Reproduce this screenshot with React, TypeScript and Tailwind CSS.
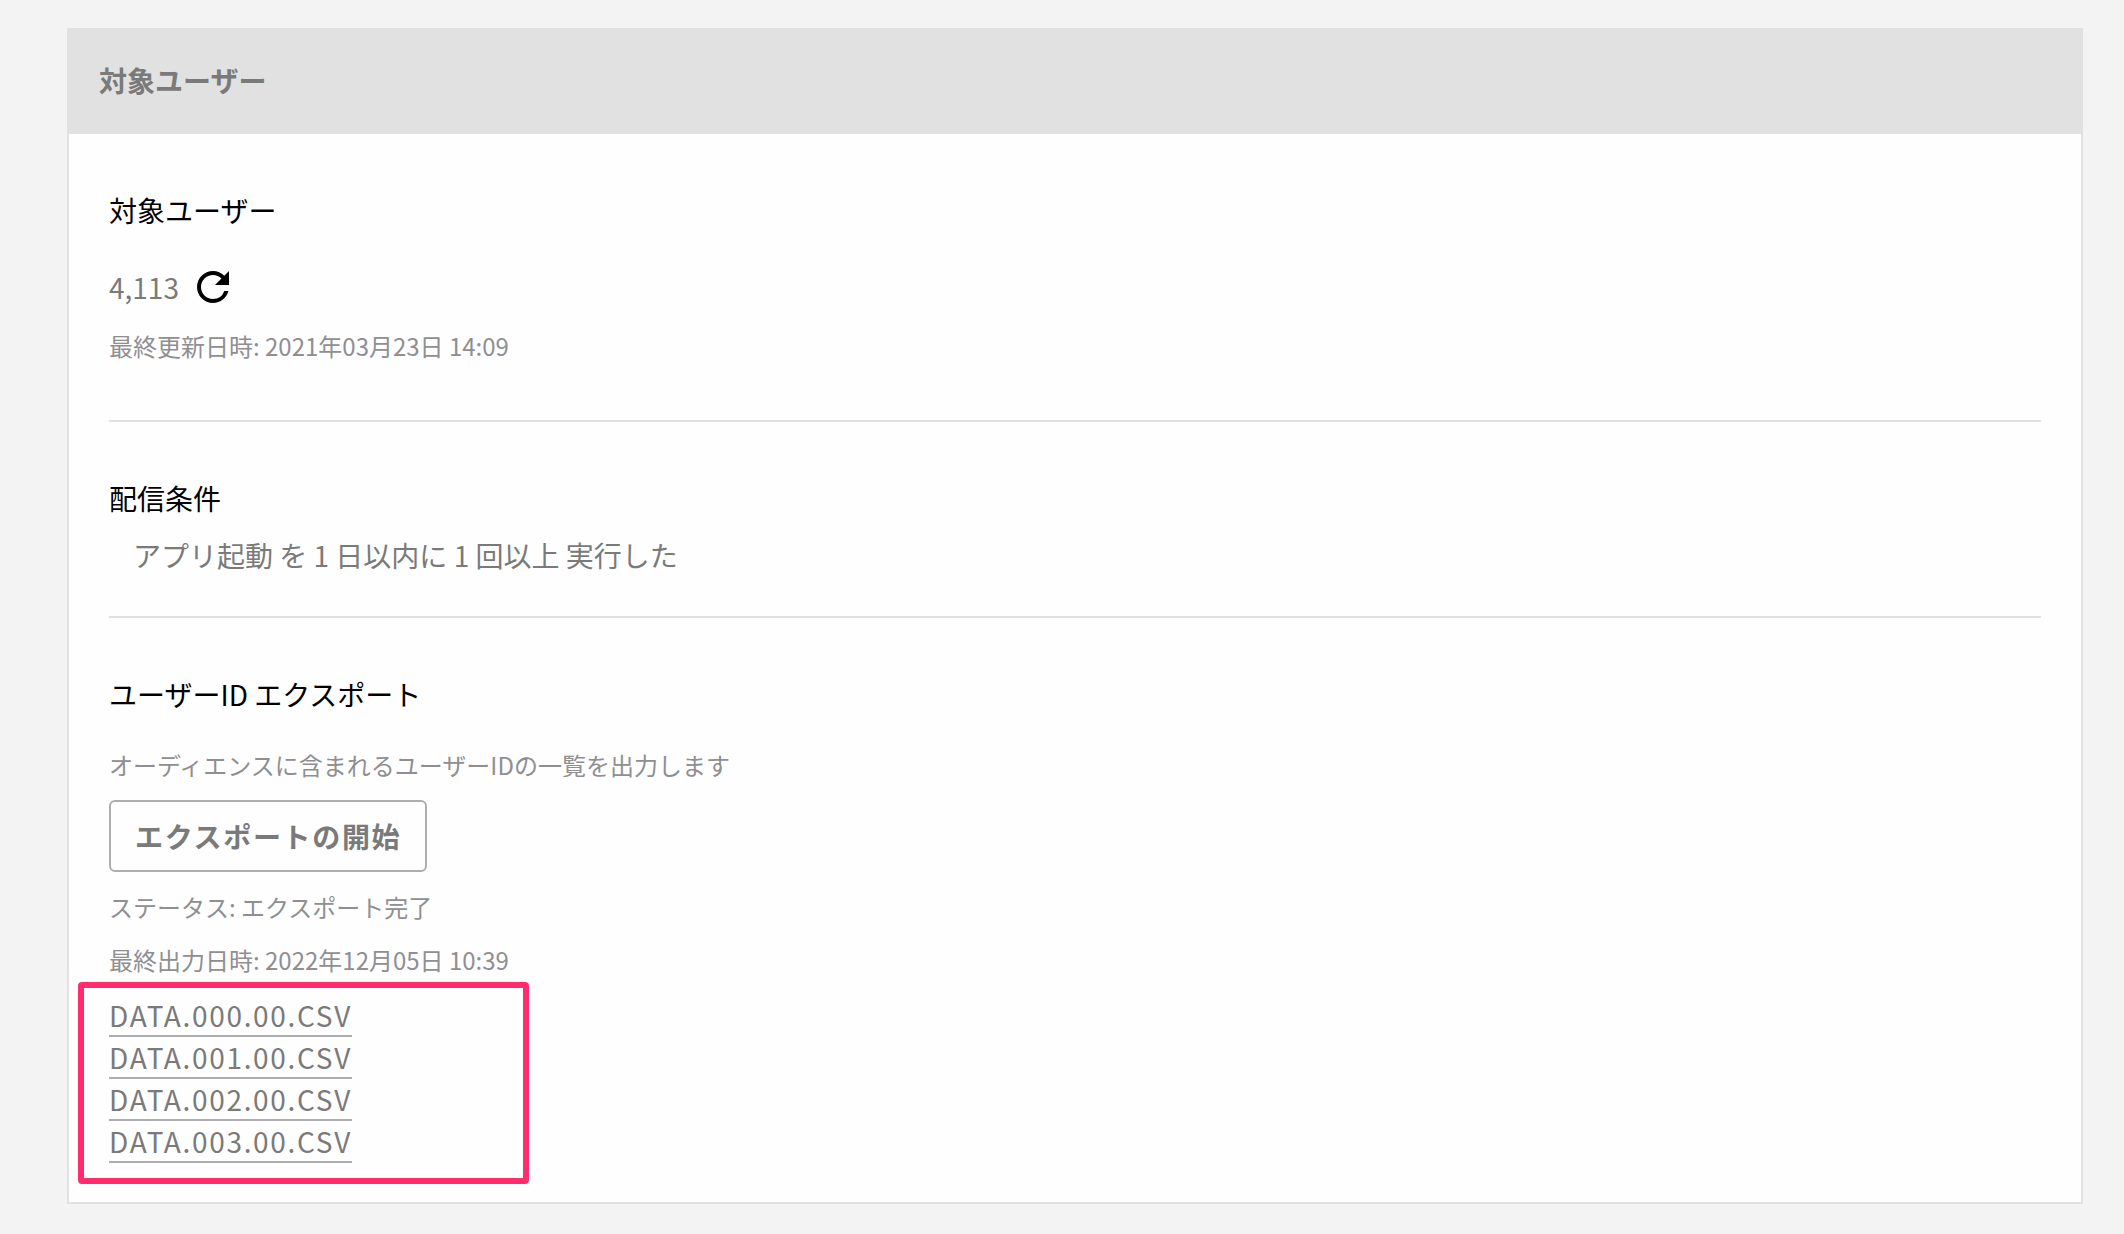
import { MdRefresh } from "react-icons/md";

const files = [
  "DATA.000.00.CSV",
  "DATA.001.00.CSV",
  "DATA.002.00.CSV",
  "DATA.003.00.CSV",
];

export default function App() {
  return (
    <div
      lang="ja"
      className="min-h-screen bg-[#f3f3f3] pt-7 pr-[41px] pb-[30px] pl-[67px] font-['Noto_Sans_CJK_JP',sans-serif] text-[28px] leading-10 text-[#7a7a7a]"
    >
      <main className="border-2 border-[#e1e1e1] bg-[#fefefe]">
        {/* Header */}
        <header className="bg-[#e1e1e1] px-[30px] pt-[30px] pb-[34px]">
          <h1 className="font-bold">対象ユーザー</h1>
        </header>

        <div className="px-10 pb-[18px]">
          {/* Audience size */}
          <section className="border-b-2 border-[#e1e1e1] pt-14 pb-14">
            <h2 className="text-black">対象ユーザー</h2>
            <div className="mt-[33px] flex items-center gap-2.5">
              <span>4,113</span>
              <button type="button" aria-label="更新" className="text-black">
                <MdRefresh className="size-12" />
              </button>
            </div>
            <p className="mt-[17px] text-2xl leading-9 text-[#8f8f92]">
              最終更新日時: 2021年03月23日 14:09
            </p>
          </section>

          {/* Conditions */}
          <section className="border-b-2 border-[#e1e1e1] pt-14 pb-[41px]">
            <h2 className="text-black">配信条件</h2>
            <p className="mt-[17px] pl-6">アプリ起動 を 1 日以内に 1 回以上 実行した</p>
          </section>

          {/* Export */}
          <section className="pt-14">
            <h2 className="text-black">ユーザーID エクスポート</h2>
            <p className="mt-[33px] text-2xl leading-9 text-[#8f8f92]">
              オーディエンスに含まれるユーザーIDの一覧を出力します
            </p>
            <button
              type="button"
              className="mt-[17px] block rounded-md border-2 border-[#aeaeb2] px-6 py-3.5 font-bold tracking-[0.06em]"
            >
              エクスポートの開始
            </button>
            <p className="mt-[17px] text-2xl leading-9 text-[#8f8f92]">
              ステータス: エクスポート完了
            </p>
            <p className="mt-[17px] text-2xl leading-9 text-[#8f8f92]">
              最終出力日時: 2022年12月05日 10:39
            </p>
            <ul className="mt-1 -ml-[31px] w-[451px] rounded-sm border-[6px] border-[#ff2d6e] px-[25px] pt-[7px] pb-[15px]">
              {files.map((file) => (
                <li key={file} className="flex">
                  <a href="#" className="border-b-2 border-[#aeaeb2] tracking-[0.06em]">
                    {file}
                  </a>
                </li>
              ))}
            </ul>
          </section>
        </div>
      </main>
    </div>
  );
}
